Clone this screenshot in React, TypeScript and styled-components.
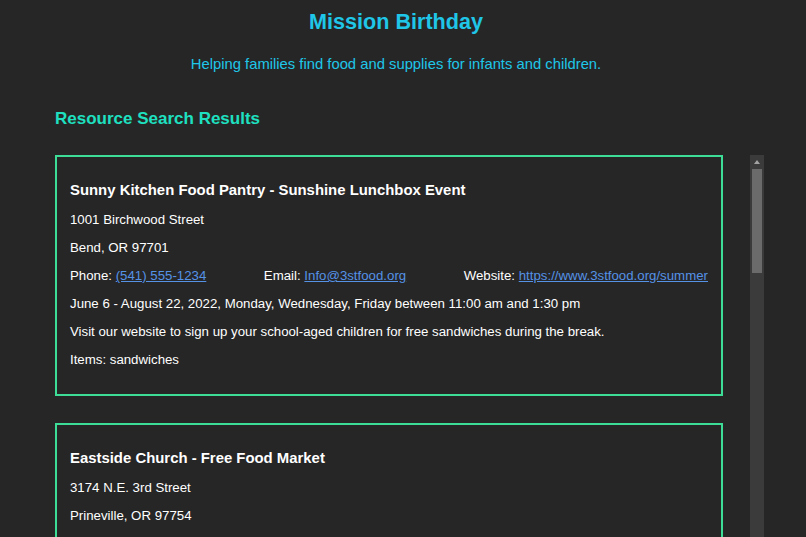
import React from 'react';
import styled, { createGlobalStyle } from 'styled-components';

const GlobalStyle = createGlobalStyle`
  html, body {
    margin: 0;
    padding: 0;
    background-color: #262626;
    font-family: "Liberation Sans", Arial, sans-serif;
    color: #ffffff;
  }
`;

const Page = styled.div`
  width: 100%;
  height: 537px;
  display: flex;
  flex-direction: column;
  overflow: hidden;
`;

const Header = styled.header`
  width: 792px;
  display: flex;
  flex-direction: column;
  align-items: center;
`;

const Title = styled.h1`
  margin: 9px 0 0;
  font-size: 21.6px;
  line-height: 25px;
  font-weight: bold;
  color: #1fc6e8;
`;

const Tagline = styled.p`
  margin: 21px 0 0;
  font-size: 14.8px;
  line-height: 18px;
  color: #1fc6e8;
`;

const SectionTitle = styled.h2`
  margin: 36px 0 0 55px;
  font-size: 17px;
  line-height: 20px;
  font-weight: bold;
  color: #1ee0c0;
`;

const Results = styled.div`
  margin: 26px 0 0 55px;
  width: 709px;
  height: 420px;
  flex-shrink: 0;
  display: flex;
`;

const List = styled.div`
  flex: 1;
  overflow: hidden;
  display: flex;
  flex-direction: column;
  gap: 27px;
`;

const ScrollTrack = styled.div`
  width: 14px;
  background: #3b3b3b;
  display: flex;
  flex-direction: column;
  align-items: center;
`;

const ScrollButton = styled.div`
  height: 14px;
  width: 14px;
  display: flex;
  align-items: center;
  justify-content: center;
`;

const ScrollArrow = styled.div`
  width: 0;
  height: 0;
  border-left: 3.5px solid transparent;
  border-right: 3.5px solid transparent;
  border-bottom: 4px solid #a3a3a3;
`;

const ScrollThumb = styled.div<{ $size: number }>`
  width: 10px;
  height: ${(p) => p.$size}px;
  background: #6b6b6b;
`;

const Card = styled.div`
  flex-shrink: 0;
  width: 668px;
  box-sizing: border-box;
  border: 2px solid #3ddc97;
  padding: 17px 13px 20px;
  display: flex;
  flex-direction: column;
`;

const CardTitle = styled.h3`
  margin: 0;
  font-size: 14.9px;
  line-height: 32px;
  font-weight: bold;
`;

const Line = styled.p`
  margin: 0;
  font-size: 13.25px;
  line-height: 28px;
`;

const ContactRow = styled.div`
  display: flex;
  justify-content: space-between;
  font-size: 13.25px;
  line-height: 28px;
`;

const Link = styled.a`
  color: #5592e6;
  text-decoration: underline;
`;

type Resource = {
  name: string;
  street: string;
  city: string;
  phone: string;
  email: string;
  website: string;
  lines: string[];
};

const resources: Resource[] = [
  {
    name: 'Sunny Kitchen Food Pantry - Sunshine Lunchbox Event',
    street: '1001 Birchwood Street',
    city: 'Bend, OR 97701',
    phone: '(541) 555-1234',
    email: 'Info@3stfood.org',
    website: 'https://www.3stfood.org/summer',
    lines: [
      'June 6 - August 22, 2022, Monday, Wednesday, Friday between 11:00 am and 1:30 pm',
      'Visit our website to sign up your school-aged children for free sandwiches during the break.',
      'Items: sandwiches',
    ],
  },
  {
    name: 'Eastside Church - Free Food Market',
    street: '3174 N.E. 3rd Street',
    city: 'Prineville, OR 97754',
    phone: '(541) 555-9876',
    email: 'market@eastside.org',
    website: 'https://www.eastside.org/market',
    lines: [
      'Every Saturday between 9:00 am and 12:00 pm',
      'Free groceries for families in need, no registration required.',
      'Items: diapers, formula, baby food, canned goods',
    ],
  },
];

function ResourceCard({ item }: { item: Resource }) {
  return (
    <Card>
      <CardTitle>{item.name}</CardTitle>
      <Line>{item.street}</Line>
      <Line>{item.city}</Line>
      <ContactRow>
        <span>
          Phone: <Link href="#">{item.phone}</Link>
        </span>
        <span>
          Email: <Link href="#">{item.email}</Link>
        </span>
        <span>
          Website: <Link href="#">{item.website}</Link>
        </span>
      </ContactRow>
      {item.lines.map((l) => (
        <Line key={l}>{l}</Line>
      ))}
    </Card>
  );
}

function App() {
  return (
    <Page>
      <GlobalStyle />
      <Header>
        <Title>Mission Birthday</Title>
        <Tagline>Helping families find food and supplies for infants and children.</Tagline>
      </Header>
      <SectionTitle>Resource Search Results</SectionTitle>
      <Results>
        <List>
          {resources.map((r) => (
            <ResourceCard key={r.name} item={r} />
          ))}
        </List>
        <ScrollTrack>
          <ScrollButton>
            <ScrollArrow />
          </ScrollButton>
          <ScrollThumb $size={104} />
        </ScrollTrack>
      </Results>
    </Page>
  );
}

export default App;
